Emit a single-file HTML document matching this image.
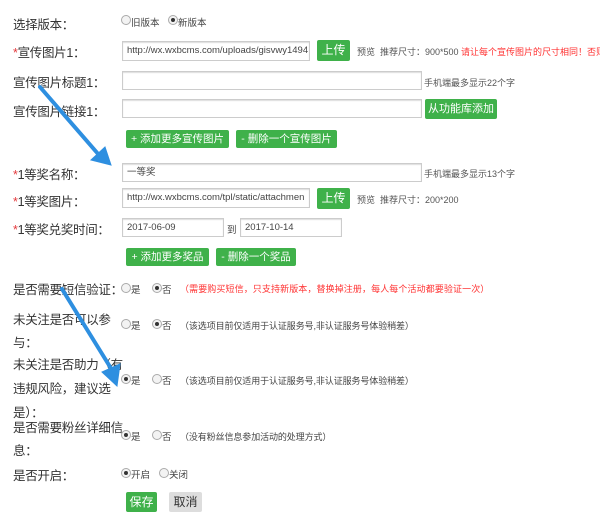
<!DOCTYPE html><html><head><meta charset="utf-8"><style>
body{margin:0;width:600px;height:515px;background:#fff;position:relative;overflow:hidden;font-family:"Liberation Sans","Noto Sans CJK SC",sans-serif;color:#333}
.a{position:absolute;white-space:nowrap}
.l{font-size:12.5px;left:13px;letter-spacing:-0.3px}
.s{color:#e4393c}
.in{position:absolute;border:1px solid #ccc;box-shadow:inset 0 1px 1px #ddd;background:#fff;font-size:9.5px;color:#444;line-height:18px;padding-left:4px;box-sizing:border-box;overflow:hidden;white-space:nowrap}
.b{position:absolute;background:#3fb14a;color:#fff;font-size:10.5px;text-align:center;border-radius:2px;box-sizing:border-box;white-space:nowrap;overflow:hidden}
.h{font-size:9px;color:#555}
.r{position:absolute;width:8px;height:8px;border:1px solid #aaa;border-radius:50%;background:#f3f3f3}
.r.on::after{content:"";position:absolute;left:2px;top:2px;width:4px;height:4px;border-radius:50%;background:#333}
.t{font-size:9.5px;color:#444}
.d{font-size:9px;color:#444;letter-spacing:-0.1px}
</style></head><body>
<div class="a l" style="top:14px">选择版本：</div>
<div class="r" style="left:121px;top:15px"></div><div class="a t" style="left:131px;top:15px">旧版本</div>
<div class="r on" style="left:168px;top:15px"></div><div class="a t" style="left:178px;top:15px">新版本</div>

<div class="a l" style="top:42px"><span class="s">*</span>宣传图片1：</div>
<div class="in" style="left:122px;top:41px;width:188px;height:20px">http://wx.wxbcms.com/uploads/gisvwy1494</div>
<div class="b" style="left:317px;top:40px;width:33px;height:21px;line-height:21px;font-size:12px">上传</div>
<div class="a h" style="left:357px;top:45px">预览&nbsp; 推荐尺寸：900*500 <span style="color:#f33">请让每个宣传图片的尺寸相同！否则</span></div>

<div class="a l" style="top:72px">宣传图片标题1：</div>
<div class="in" style="left:122px;top:71px;width:300px;height:19px"></div>
<div class="a h" style="left:424px;top:76px">手机端最多显示22个字</div>

<div class="a l" style="top:101px">宣传图片链接1：</div>
<div class="in" style="left:122px;top:99px;width:300px;height:19px"></div>
<div class="b" style="left:425px;top:99px;width:72px;height:20px;line-height:20px;font-size:11px">从功能库添加</div>

<div class="b" style="left:126px;top:130px;width:103px;height:18px;line-height:18px">+ 添加更多宣传图片</div>
<div class="b" style="left:236px;top:130px;width:101px;height:18px;line-height:18px">- 删除一个宣传图片</div>

<div class="a l" style="top:164px"><span class="s">*</span>1等奖名称：</div>
<div class="in" style="left:122px;top:163px;width:300px;height:19px">一等奖</div>
<div class="a h" style="left:424px;top:167px">手机端最多显示13个字</div>

<div class="a l" style="top:191px"><span class="s">*</span>1等奖图片：</div>
<div class="in" style="left:122px;top:188px;width:188px;height:20px">http://wx.wxbcms.com/tpl/static/attachmen</div>
<div class="b" style="left:317px;top:188px;width:33px;height:21px;line-height:21px;font-size:12px">上传</div>
<div class="a h" style="left:357px;top:193px">预览&nbsp; 推荐尺寸：200*200</div>

<div class="a l" style="top:219px"><span class="s">*</span>1等奖兑奖时间：</div>
<div class="in" style="left:122px;top:218px;width:102px;height:19px">2017-06-09</div>
<div class="a t" style="left:227px;top:222px">到</div>
<div class="in" style="left:240px;top:218px;width:102px;height:19px">2017-10-14</div>

<div class="b" style="left:126px;top:248px;width:83px;height:18px;line-height:18px">+ 添加更多奖品</div>
<div class="b" style="left:216px;top:248px;width:80px;height:18px;line-height:18px">- 删除一个奖品</div>

<div class="a l" style="top:279px">是否需要短信验证：</div>
<div class="r" style="left:121px;top:283px"></div><div class="a t" style="left:131px;top:282px">是</div>
<div class="r on" style="left:152px;top:283px"></div><div class="a t" style="left:162px;top:282px">否</div>
<div class="a d" style="left:180px;top:282px;color:#f33;letter-spacing:0.1px">（需要购买短信，只支持新版本，替换掉注册，每人每个活动都要验证一次）</div>

<div class="a l" style="top:309px;line-height:23px">未关注是否可以参<br>与：</div>
<div class="r" style="left:121px;top:319px"></div><div class="a t" style="left:131px;top:318px">是</div>
<div class="r on" style="left:152px;top:319px"></div><div class="a t" style="left:162px;top:318px">否</div>
<div class="a d" style="left:180px;top:319px">（该选项目前仅适用于认证服务号,非认证服务号体验稍差）</div>

<div class="a l" style="top:353px;line-height:24px">未关注是否助力（有<br>违规风险，建议选<br>是）：</div>
<div class="r on" style="left:121px;top:374px"></div><div class="a t" style="left:131px;top:373px">是</div>
<div class="r" style="left:152px;top:374px"></div><div class="a t" style="left:162px;top:373px">否</div>
<div class="a d" style="left:180px;top:374px">（该选项目前仅适用于认证服务号,非认证服务号体验稍差）</div>

<div class="a l" style="top:417px;line-height:23px">是否需要粉丝详细信<br>息：</div>
<div class="r on" style="left:121px;top:430px"></div><div class="a t" style="left:131px;top:429px">是</div>
<div class="r" style="left:152px;top:430px"></div><div class="a t" style="left:162px;top:429px">否</div>
<div class="a d" style="left:180px;top:430px">（没有粉丝信息参加活动的处理方式）</div>

<div class="a l" style="top:465px">是否开启：</div>
<div class="r on" style="left:121px;top:468px"></div><div class="a t" style="left:131px;top:467px">开启</div>
<div class="r" style="left:159px;top:468px"></div><div class="a t" style="left:169px;top:467px">关闭</div>

<div class="b" style="left:126px;top:492px;width:31px;height:20px;line-height:20px;font-size:12px">保存</div>
<div class="b" style="left:169px;top:492px;width:33px;height:20px;line-height:20px;font-size:12px;background:#ddd;color:#333">取消</div>

<svg class="a" style="left:0;top:0" width="600" height="515">
<g fill="#2e8fe0" stroke="#2e8fe0" stroke-linecap="round">
<line x1="40" y1="87" x2="99" y2="155" stroke-width="4"/>
<polygon points="111,165 91,160 105,147" stroke-width="1"/>
<line x1="62" y1="289" x2="112" y2="370" stroke-width="4"/>
<polygon points="117,386 102,372 120,364" stroke-width="1"/>
</g></svg>
</body></html>
